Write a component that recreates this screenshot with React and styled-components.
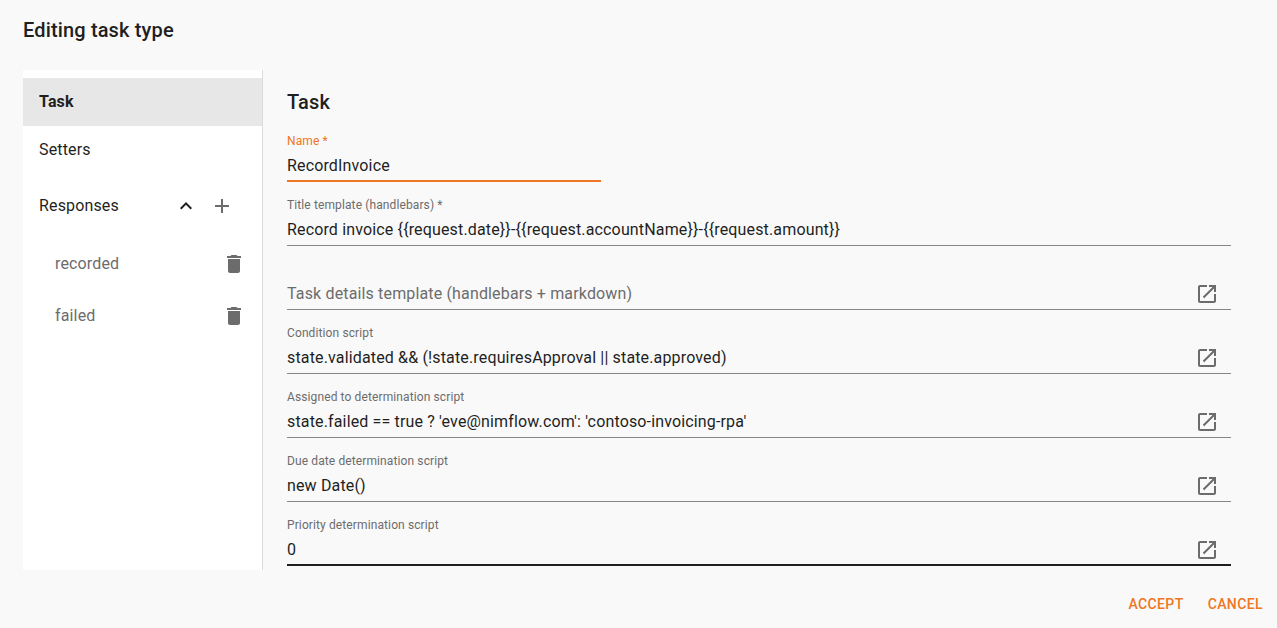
import React, { useState } from 'react';
import styled, { createGlobalStyle, css } from 'styled-components';

const color = {
  page: '#f9f9f9',
  paper: '#ffffff',
  text: '#1f1f1f',
  muted: '#6c6c6c',
  rule: '#868686',
  accent: '#ef7622',
  selected: '#e7e7e7',
  divider: '#dcdcdc',
};

const GlobalStyle = createGlobalStyle`
  *, *::before, *::after { box-sizing: border-box; }
  body {
    margin: 0;
    background: ${color.page};
    color: ${color.text};
    font-family: Roboto, "Liberation Sans", sans-serif;
    font-size: 16px;
    line-height: 24px;
    letter-spacing: 0.00938em;
    -webkit-font-smoothing: antialiased;
  }
  button, input { font: inherit; letter-spacing: inherit; color: inherit; }
`;

const Dialog = styled.form`
  display: flex;
  flex-direction: column;
  min-height: 100vh;
`;

const Heading = styled.h1`
  margin: 0;
  font-size: 20px;
  font-weight: 500;
  line-height: 32px;
  letter-spacing: 0.0075em;
`;

const TitleBar = styled.header`
  padding: 14px 23px 24px;
`;

const Content = styled.div`
  display: flex;
  padding: 0 46px 0 23px;
`;

const Sidebar = styled.nav`
  flex: 0 0 240px;
  padding: 8px 0;
  background: ${color.paper};
  border-right: 1px solid ${color.divider};
`;

const NavList = styled.ul`
  list-style: none;
  margin: 0;
  padding: 0;
`;

const NavRow = styled.li`
  display: flex;
  align-items: center;
  height: ${(p) => p.$height}px;
  padding: 0 ${(p) => (p.$nested ? 16 : 28)}px 0 0;
  background: ${(p) => (p.$selected ? color.selected : 'transparent')};
`;

const NavButton = styled.button`
  flex: 1;
  height: 48px;
  padding: 0 0 0 ${(p) => (p.$nested ? 32 : 16)}px;
  border: 0;
  background: none;
  text-align: left;
  color: ${(p) => (p.$nested ? color.muted : color.text)};
  font-weight: ${(p) => (p.$selected ? 700 : 400)};
  cursor: pointer;
`;

const IconButton = styled.button`
  display: flex;
  flex: none;
  padding: 0;
  margin-left: ${(p) => p.$gap || 0}px;
  border: 0;
  background: none;
  color: ${(p) => (p.$strong ? color.text : color.muted)};
  cursor: pointer;
`;

const Icon = styled.svg`
  display: block;
  width: 24px;
  height: 24px;
  fill: currentColor;
`;

const Main = styled.main`
  flex: 1;
  min-width: 0;
  padding: 16px 0 4px 24px;
`;

const Fields = styled.div`
  display: flex;
  flex-direction: column;
  gap: 16px;
  margin-top: 16px;
`;

const Field = styled.div`
  display: grid;
  grid-template-columns: minmax(0, 1fr) auto;
  grid-template-rows: 16px 32px;
  width: ${(p) => (p.$narrow ? '33.3%' : '100%')};
`;

const Label = styled.label`
  grid-column: 1;
  grid-row: 1;
  z-index: 1;
  font-size: 12px;
  line-height: 14px;
  letter-spacing: 0.00938em;
  color: ${(p) => (p.$active ? color.accent : color.muted)};
  ${(p) =>
    p.$resting &&
    css`
      grid-row: 2;
      font-size: 16px;
      line-height: 32px;
      pointer-events: none;
    `}
`;

const InputLine = styled.div`
  grid-column: 1 / -1;
  grid-row: 2;
  display: flex;
  align-items: center;
  padding-right: ${(p) => (p.$action ? 12 : 0)}px;
  box-shadow: inset 0 -${(p) => (p.$tone ? 2 : 1)}px
    ${(p) => color[p.$tone] || color.rule};
`;

const Input = styled.input`
  flex: 1;
  min-width: 0;
  height: 32px;
  padding: 0 0 2px;
  border: 0;
  outline: 0;
  background: none;
`;

const Actions = styled.footer`
  display: flex;
  justify-content: flex-end;
  gap: 8px;
  padding: 16px 6px 6px;
`;

const TextButton = styled.button`
  height: 36px;
  padding: 0 8px;
  border: 0;
  background: none;
  color: ${color.accent};
  font-size: 14px;
  font-weight: 500;
  letter-spacing: 0.02857em;
  text-transform: uppercase;
  cursor: pointer;
`;

const paths = {
  chevronUp: 'M12 8l-6 6 1.41 1.41L12 10.83l4.59 4.58L18 14z',
  add: 'M19 13h-6v6h-2v-6H5v-2h6V5h2v6h6v2z',
  trash: 'M6 19c0 1.1.9 2 2 2h8c1.1 0 2-.9 2-2V7H6v12zM19 4h-3.5l-1-1h-5l-1 1H5v2h14V4z',
  open: 'M19 19H5V5h7V3H5c-1.11 0-2 .9-2 2v14c0 1.1.89 2 2 2h14c1.1 0 2-.9 2-2v-7h-2v7zM14 3v2h3.59l-9.83 9.83 1.41 1.41L19 6.41V10h2V3h-7z',
};

const Glyph = ({ name }) => (
  <Icon viewBox="0 0 24 24" aria-hidden="true">
    <path d={paths[name]} />
  </Icon>
);

const fieldList = [
  { id: 'name', label: 'Name *', value: 'RecordInvoice', narrow: true, tone: 'accent' },
  {
    id: 'title',
    label: 'Title template (handlebars) *',
    value: 'Record invoice {{request.date}}-{{request.accountName}}-{{request.amount}}',
  },
  { id: 'details', label: 'Task details template (handlebars + markdown)', value: '', action: true },
  {
    id: 'condition',
    label: 'Condition script',
    value: 'state.validated && (!state.requiresApproval || state.approved)',
    action: true,
  },
  {
    id: 'assigned',
    label: 'Assigned to determination script',
    value: "state.failed == true ? 'eve@nimflow.com': 'contoso-invoicing-rpa'",
    action: true,
  },
  { id: 'due', label: 'Due date determination script', value: 'new Date()', action: true },
  { id: 'priority', label: 'Priority determination script', value: '0', action: true, tone: 'text' },
];

function TextField({ id, label, value: initial, narrow, tone, action }) {
  const [value, setValue] = useState(initial);
  return (
    <Field $narrow={narrow}>
      <Label htmlFor={id} $active={tone === 'accent'} $resting={!value}>
        {label}
      </Label>
      <InputLine $tone={tone} $action={action}>
        <Input
          id={id}
          type="text"
          spellCheck={false}
          value={value}
          onChange={(e) => setValue(e.target.value)}
        />
        {action && (
          <IconButton type="button" aria-label={`Open editor: ${label}`}>
            <Glyph name="open" />
          </IconButton>
        )}
      </InputLine>
    </Field>
  );
}

export default function App() {
  return (
    <>
      <GlobalStyle />
      <Dialog onSubmit={(e) => e.preventDefault()}>
        <TitleBar>
          <Heading>Editing task type</Heading>
        </TitleBar>
        <Content>
          <Sidebar aria-label="Sections">
            <NavList>
              <NavRow $height={48} $selected>
                <NavButton type="button" $selected>Task</NavButton>
              </NavRow>
              <NavRow $height={48}>
                <NavButton type="button">Setters</NavButton>
              </NavRow>
              <NavRow $height={64}>
                <NavButton type="button">Responses</NavButton>
                <IconButton type="button" $strong aria-label="Collapse responses">
                  <Glyph name="chevronUp" />
                </IconButton>
                <IconButton type="button" $gap={12} aria-label="Add response">
                  <Glyph name="add" />
                </IconButton>
              </NavRow>
              {['recorded', 'failed'].map((name) => (
                <NavRow key={name} $height={52} $nested>
                  <NavButton type="button" $nested>{name}</NavButton>
                  <IconButton type="button" aria-label={`Delete ${name}`}>
                    <Glyph name="trash" />
                  </IconButton>
                </NavRow>
              ))}
            </NavList>
          </Sidebar>
          <Main>
            <Heading as="h2">Task</Heading>
            <Fields>
              {fieldList.map((field) => (
                <TextField key={field.id} {...field} />
              ))}
            </Fields>
          </Main>
        </Content>
        <Actions>
          <TextButton type="submit">Accept</TextButton>
          <TextButton type="button">Cancel</TextButton>
        </Actions>
      </Dialog>
    </>
  );
}
